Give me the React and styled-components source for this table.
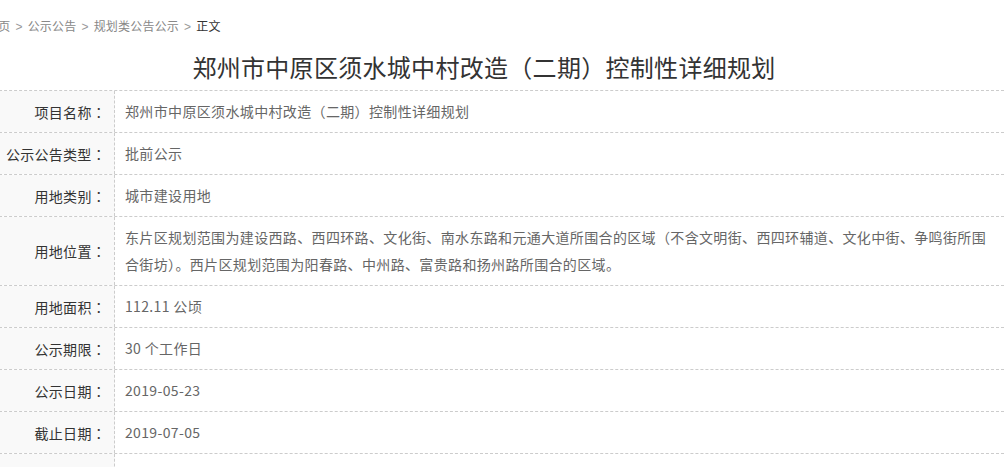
import React from "react";
import styled, { createGlobalStyle } from "styled-components";

const GlobalStyle = createGlobalStyle`
  html, body {
    margin: 0;
    padding: 0;
    background: #fff;
    overflow: hidden;
  }
  body {
    font-family: "Noto Sans CJK SC", "Noto Sans", sans-serif;
  }
`;

const Page = styled.div`
  width: 1040px;
  margin-left: -36px;
`;

const Crumbs = styled.div`
  height: 52px;
  padding-left: 22px;
  padding-top: 17px;
  box-sizing: border-box;
  font-size: 12px;
  line-height: 18px;
  letter-spacing: 0.2px;
  color: #888;
`;

const Sep = styled.span`
  margin: 0 5px;
  font-family: "Liberation Sans", sans-serif;
  color: #999;
`;

const Current = styled.span`
  color: #333;
`;

const Title = styled.h1`
  margin: 0;
  height: 38px;
  font-size: 24px;
  line-height: 30px;
  font-weight: normal;
  letter-spacing: 0.3px;
  text-align: center;
  color: #333;
`;

const Table = styled.div`
  border-top: 1px dashed #ccc;
`;

const Row = styled.div`
  display: flex;
  border-bottom: 1px dashed #ccc;
`;

const Label = styled.div`
  flex: none;
  width: 151px;
  box-sizing: border-box;
  padding-right: 8px;
  background: #f9f9f9;
  border-right: 1px dashed #ccc;
  display: flex;
  align-items: center;
  justify-content: flex-end;
  font-size: 14px;
  letter-spacing: 0.3px;
  color: #333;
`;

const Colon = styled.span`
  font-family: "Noto Sans CJK TC", sans-serif;
`;

const Value = styled.div`
  flex: 1;
  padding: 7px 10px;
  font-size: 14px;
  line-height: 27px;
  letter-spacing: 0.35px;
  color: #666;
  min-height: 27px;
`;

const rows = [
  ["项目名称", "郑州市中原区须水城中村改造（二期）控制性详细规划"],
  ["公示公告类型", "批前公示"],
  ["用地类别", "城市建设用地"],
  [
    "用地位置",
    "东片区规划范围为建设西路、西四环路、文化街、南水东路和元通大道所围合的区域（不含文明街、西四环辅道、文化中街、争鸣街所围合街坊）。西片区规划范围为阳春路、中州路、富贵路和扬州路所围合的区域。",
  ],
  ["用地面积", "112.11 公顷"],
  ["公示期限", "30 个工作日"],
  ["公示日期", "2019-05-23"],
  ["截止日期", "2019-07-05"],
  ["", ""],
];

export default function App() {
  return (
    <Page>
      <GlobalStyle />
      <Crumbs>
        首页<Sep>&gt;</Sep>公示公告<Sep>&gt;</Sep>规划类公告公示<Sep>&gt;</Sep>
        <Current>正文</Current>
      </Crumbs>
      <Title>郑州市中原区须水城中村改造（二期）控制性详细规划</Title>
      <Table>
        {rows.map(([label, value], i) => (
          <Row key={i}>
            <Label>
              {label}
              {label && <Colon>：</Colon>}
            </Label>
            <Value>{value}</Value>
          </Row>
        ))}
      </Table>
    </Page>
  );
}
